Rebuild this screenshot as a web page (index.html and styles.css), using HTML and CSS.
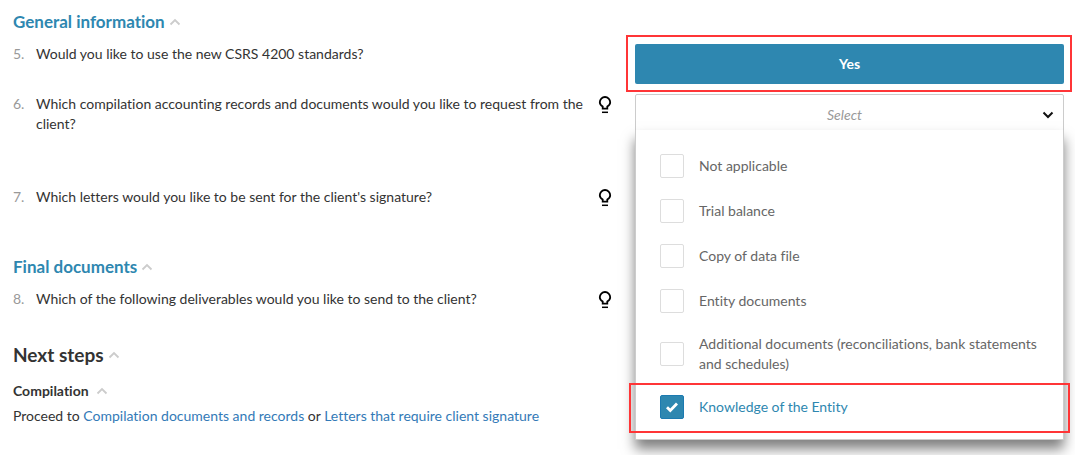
FILE: index.html
```html
<!DOCTYPE html>
<html lang="en">
<head>
<meta charset="utf-8">
<title>Engagement checklist</title>
<link rel="stylesheet" href="styles.css">
</head>
<body>
<svg class="sprite" aria-hidden="true">
  <symbol id="caret-up" viewBox="0 0 12 8"><path d="M1.500 6.500 6 2l4.500 4.500" fill="none" stroke="currentColor" stroke-width="1.800"/></symbol>
  <symbol id="bulb" viewBox="0 0 14 18"><path d="M4.700 12.700v-2.200C2.700 9.300 1.800 8 1.800 6.200a5.200 5.200 0 0 1 10.400 0c0 1.800-.9 3.100-2.900 4.300v2.200z" fill="none" stroke="currentColor" stroke-width="1.800"/><path d="M4 16.300h6" stroke="currentColor" stroke-width="1.500"/></symbol>
</svg>
<main class="page">
  <section>
    <h2 class="heading">General information <svg class="caret"><use href="#caret-up"/></svg></h2>
    <div class="row row-short">
      <div class="question"><span class="num">5.</span><p class="text">Would you like to use the new CSRS 4200 standards?</p></div>
      <div class="answer marked"><button class="yes" type="button">Yes</button></div>
    </div>
    <div class="row row-tall">
      <div class="question"><span class="num">6.</span><p class="text">Which compilation accounting records and documents would you like to request from the client?</p><svg class="bulb"><use href="#bulb"/></svg></div>
      <div class="answer">
        <div class="picker">
          <select class="select" aria-label="Records and documents"><option>Select</option></select>
          <svg class="arrow" viewBox="0 0 12 8"><path d="M1.500 1.500 6 6l4.500-4.500" fill="none" stroke="currentColor" stroke-width="2"/></svg>
        </div>
        <div class="menu">
          <label class="option"><input class="box" type="checkbox"><span>Not applicable</span></label>
          <label class="option"><input class="box" type="checkbox"><span>Trial balance</span></label>
          <label class="option"><input class="box" type="checkbox"><span>Copy of data file</span></label>
          <label class="option"><input class="box" type="checkbox"><span>Entity documents</span></label>
          <label class="option option-long"><input class="box" type="checkbox"><span>Additional documents (reconciliations, bank statements and schedules)</span></label>
          <label class="option option-on"><span class="tick"><input class="box" type="checkbox" checked><svg class="check" viewBox="0 0 14 12"><path d="M2 6.200 5.300 9.500 12 2.500" fill="none" stroke="currentColor" stroke-width="2.800"/></svg></span><span>Knowledge of the Entity</span></label>
        </div>
      </div>
    </div>
    <div class="row row-mid">
      <div class="question"><span class="num">7.</span><p class="text">Which letters would you like to be sent for the client's signature?</p><svg class="bulb"><use href="#bulb"/></svg></div>
    </div>
  </section>
  <section>
    <h2 class="heading">Final documents <svg class="caret"><use href="#caret-up"/></svg></h2>
    <div class="row row-short">
      <div class="question"><span class="num">8.</span><p class="text">Which of the following deliverables would you like to send to the client?</p><svg class="bulb"><use href="#bulb"/></svg></div>
    </div>
  </section>
  <section>
    <h1 class="title">Next steps <svg class="caret"><use href="#caret-up"/></svg></h1>
    <h3 class="subtitle">Compilation <svg class="caret"><use href="#caret-up"/></svg></h3>
    <p class="text">Proceed to <a class="link" href="#documents">Compilation documents and records</a> or <a class="link" href="#letters">Letters that require client signature</a></p>
  </section>
</main>
</body>
</html>
```
FILE: styles.css
```css
* { box-sizing: border-box; }
body {
  margin: 0;
  background: #fff;
  color: #333;
  font: 14px/20px Lato, "Open Sans", sans-serif;
  font-variant-ligatures: none;
}
h1, h2, h3, p { margin: 0; }
.sprite { position: absolute; width: 0; height: 0; }
.page { min-height: 100vh; padding: 12px 11px 0 13px; }
.heading, .title, .subtitle { display: flex; align-items: center; gap: 4px; font-weight: 700; }
.heading { height: 20px; margin-bottom: 12px; font-size: 17px; color: #2e87b0; }
.title { height: 24px; margin: 4px 0 14px; font-size: 19px; }
.subtitle { height: 20px; margin-bottom: 5px; gap: 7px; font-size: 14px; }
.caret { width: 12px; height: 8px; color: #ccc; }
.row { display: grid; grid-template-columns: 29fr 20fr; }
.row-short { min-height: 50px; }
.row-tall { min-height: 93px; }
.row-mid { min-height: 70px; }
.question { display: flex; align-items: flex-start; padding-right: 23px; }
.num { width: 23px; flex: none; color: #999; }
.question .text { flex: 1; }
.bulb { flex: none; width: 14px; height: 18px; margin-top: 2px; color: #000; }
.answer { position: relative; }
.marked::after, .option-on::after {
  content: "";
  position: absolute;
  border: 2px solid #ff3537;
  pointer-events: none;
}
.marked::after { inset: -9px -8px 2px -9px; }
.option-on::after { inset: -2px -7px -4px; }
.yes {
  display: block;
  width: 100%;
  height: 40px;
  border: 0;
  border-radius: 2px;
  background: #2e87b0;
  color: #fff;
  font: 700 14px/20px Lato, sans-serif;
}
.picker { position: relative; }
.select {
  display: block;
  width: 100%;
  height: 42px;
  padding: 0 26px 0 16px;
  border: 1px solid #ccc;
  border-radius: 2px;
  appearance: none;
  background: #fff;
  color: #999;
  font: italic 14px/20px Lato, sans-serif;
  text-align: center;
  text-align-last: center;
}
.arrow { position: absolute; top: 17px; right: 10px; width: 12px; height: 8px; color: #111; }
.menu {
  position: absolute;
  top: 36px;
  left: 0;
  right: 0;
  padding: 13px 0 10px;
  border: 1px solid #ccc;
  border-top: 0;
  background: #fff;
  box-shadow: 0 9px 12px rgba(0, 0, 0, .5);
}
.option {
  position: relative;
  display: flex;
  align-items: center;
  gap: 15px;
  min-height: 45px;
  padding: 0 24px;
  color: #666;
}
.option-long { min-height: 62px; }
.option-on { min-height: 44px; color: #2e87b0; }
.box {
  appearance: none;
  flex: none;
  display: block;
  width: 24px;
  height: 24px;
  margin: 0;
  border: 1px solid #ddd;
  border-radius: 2px;
  background: #fff;
}
.box:checked { border-color: #1c7ab0; background: #2e87b0; }
.tick { position: relative; }
.check { position: absolute; top: 6px; left: 5px; width: 14px; height: 12px; color: #fff; }
.link { color: #337ab7; text-decoration: none; }
```
